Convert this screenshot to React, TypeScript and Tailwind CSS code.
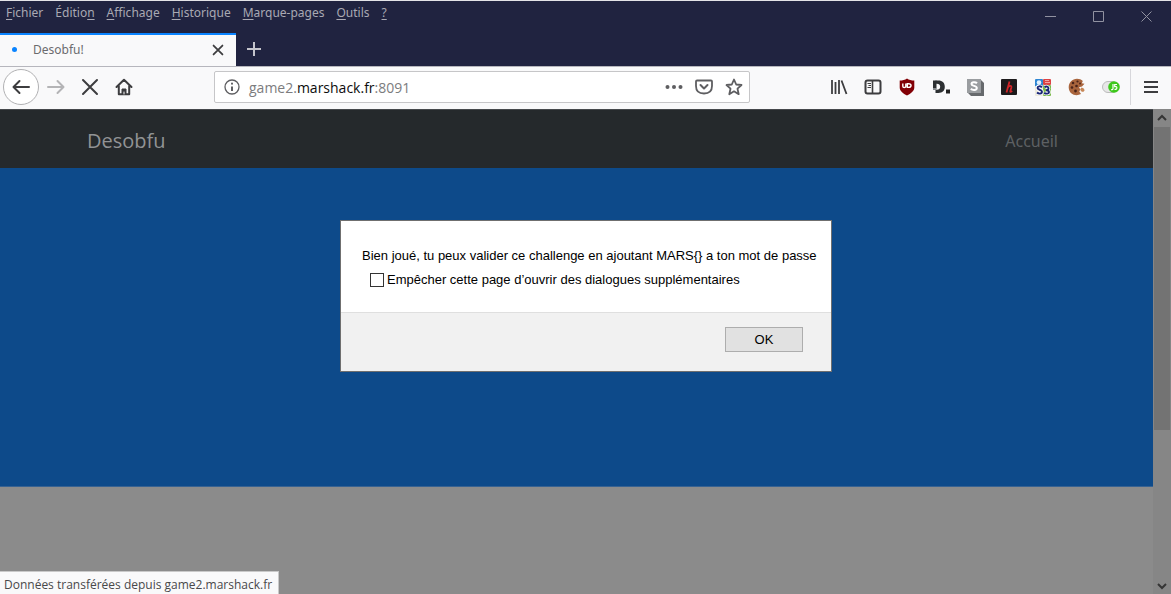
import type { ReactNode } from 'react';

const menus: [string, string, string][] = [
  ['', 'F', 'ichier'],
  ['Éditio', 'n', ''],
  ['', 'A', 'ffichage'],
  ['', 'H', 'istorique'],
  ['', 'M', 'arque-pages'],
  ['', 'O', 'utils'],
  ['', '?', ''],
];

function ToolButton({ label, children }: { label: string; children: ReactNode }) {
  return (
    <button type="button" aria-label={label} className="flex h-8 w-[34px] shrink-0 items-center justify-center text-[#3d3d3f]">
      {children}
    </button>
  );
}

function Icon({ size = 18, width = 2, children }: { size?: number; width?: number; children: ReactNode }) {
  return (
    <svg width={size} height={size} viewBox="0 0 18 18" fill="none" stroke="currentColor" strokeWidth={width} strokeLinecap="round" strokeLinejoin="round">
      {children}
    </svg>
  );
}

function TitleBar() {
  return (
    <header className="flex h-[66px] shrink-0 justify-between border-t border-[#e4e4e8] bg-[#202340]">
      <div className="flex flex-col">
        <nav className="flex h-8 items-start gap-3 pt-1 pl-1.5 text-[12px] leading-4 text-[#a9a9b3]">
          {menus.map(([before, key, after]) => (
            <button type="button" key={before + key + after}>
              {before}
              <span className="underline underline-offset-2">{key}</span>
              {after}
            </button>
          ))}
        </nav>
        <div className="flex flex-1 items-stretch">
          <div className="flex w-[236px] items-center border-t-2 border-[#0a84ff] bg-[#f9f9fa] pr-2.5 pb-0.5 pl-3">
            <span className="size-[5px] rounded-full bg-[#0a84ff]" />
            <span className="ml-4 flex-1 text-[12px] text-[#6b6b6e]">Desobfu!</span>
            <button type="button" aria-label="Fermer l’onglet" className="flex size-4 items-center justify-center text-[#3d3d3f]">
              <Icon size={16} width={2}>
                <path d="M4 4l10 10M14 4L4 14" />
              </Icon>
            </button>
          </div>
          <button type="button" aria-label="Nouvel onglet" className="flex w-9 items-center justify-center pb-0.5 text-[#c4c4cc]">
            <Icon>
              <path d="M9 2v14M2 9h14" strokeLinecap="butt" />
            </Icon>
          </button>
        </div>
      </div>
      <div className="flex h-[30px] pr-px text-[#9192a1]">
        <button type="button" aria-label="Réduire" className="flex w-12 items-center justify-center">
          <svg width="11" height="11" stroke="currentColor" fill="none"><path d="M0 5.5h11" /></svg>
        </button>
        <button type="button" aria-label="Agrandir" className="flex w-12 items-center justify-center">
          <svg width="11" height="11" stroke="currentColor" fill="none"><path d="M.5.5h10v10H.5z" /></svg>
        </button>
        <button type="button" aria-label="Fermer" className="flex w-12 items-center justify-center">
          <svg width="11" height="11" stroke="currentColor" fill="none"><path d="M.5.5l10 10M10.500.5l-10 10" /></svg>
        </button>
      </div>
    </header>
  );
}

function Extensions() {
  return (
    <>
      <ToolButton label="Bibliothèque">
        <svg width="18" height="16" viewBox="0 0 18 16" fill="none" stroke="currentColor" strokeWidth="1.8">
          <path d="M2 1v14M5.500 3v12M9 1v14M11.500 1.500l5 13.500" />
        </svg>
      </ToolButton>
      <ToolButton label="Panneau latéral">
        <svg width="18" height="16" viewBox="0 0 18 16" fill="none" stroke="currentColor">
          <rect x="1.500" y="1.500" width="15" height="13" rx="2" strokeWidth="2" />
          <path d="M8.500 2v12" strokeWidth="1.600" />
          <path d="M3.500 4.500h3.500M4.500 6.500h2.500M3.500 8.500h3.500" />
        </svg>
      </ToolButton>
      <ToolButton label="uBlock">
        <svg width="16" height="18" viewBox="0 0 16 18" fill="none">
          <path d="M8 .5c2 1.400 4.500 2 7.300 2v7c0 3.500-3.400 6-7.300 8-3.900-2-7.300-4.500-7.300-8v-7C3.500 2.500 6 1.900 8 .5z" fill="#820006" />
          <path d="M3.800 5.500v2.700c0 1.800 3 1.800 3 0V5.500M8.300 9.400V5.700h1.200c3.400 0 3.400 3.700 0 3.700z" stroke="#fff" strokeWidth="1.400" />
        </svg>
      </ToolButton>
      <ToolButton label="Dashlane">
        <svg width="18" height="16" viewBox="0 0 18 16">
          <path d="M3.500 1.500h2.800c4.200 0 6.500 2.400 6.500 6.300s-2.300 6.200-6.500 6.200H3.500v-3.300h1.300c2.200 0 3.400-1 3.400-2.900S7 4.800 4.800 4.800H3.500z" fill="#2d3032" />
          <path d="M1 1.500h3.500v8H1z" fill="#2d3032" />
          <path d="M1 9h3.500v2H1z" fill="#85898c" />
          <rect x="14" y="10.500" width="4" height="4" fill="#222" />
        </svg>
      </ToolButton>
      <ToolButton label="Stylus">
        <svg width="17" height="17" viewBox="0 0 17 17">
          <path d="M1 1h13l3 3v13H4l-3-3z" fill="#66696c" />
          <rect width="14" height="14" fill="#9a9da0" />
          <path d="M10 4.300C8.500 2.700 4.500 2.700 4.500 5s5.300 1.500 5.300 4-4.300 2.500-6 .8" fill="none" stroke="#fff" strokeWidth="2" />
        </svg>
      </ToolButton>
      <ToolButton label="Hackbar">
        <svg width="16" height="16" viewBox="0 0 16 16">
          <rect width="16" height="16" rx="1" fill="#1d1b1c" />
          <path d="M8.500 2.500L5.500 13.500M6.300 9.500C8 6.500 11 6 10.300 8.800l-1 3.300c-.2 1 .8 1 1.800-.3" fill="none" stroke="#cf2528" strokeWidth="1.800" />
        </svg>
      </ToolButton>
      <ToolButton label="S3 Traducteur">
        <svg width="18" height="17" viewBox="0 0 18 17">
          <rect x="1" width="8" height="8" rx="1" fill="#2e86d3" />
          <circle cx="5" cy="3.500" r="2.300" fill="#e4f2ff" />
          <rect x="9" width="8" height="6" rx="1" fill="#dc4345" />
          <path d="M11 1.500h4M11 3.500h5" stroke="#f4a3a3" />
          <rect x="1" y="7" width="8" height="10" rx="1" fill="#eceadb" />
          <rect x="9" y="6" width="8" height="11" rx="1" fill="#79b84b" />
          <g fill="none">
            <path d="M8 8.300C6.500 6.800 3.500 7 3.500 9s4.500 1.500 4.500 3.800-3.500 2.200-5 .7M10.500 8.200c1.800-1.200 4-.7 4 1s-1.300 2-2.500 2c1.500 0 3 .5 3 2s-2.800 2-4.800.7" stroke="#fff" strokeWidth="3.500" />
            <path d="M8 8.300C6.500 6.800 3.500 7 3.500 9s4.500 1.500 4.500 3.800-3.500 2.200-5 .7M10.500 8.200c1.800-1.200 4-.7 4 1s-1.300 2-2.500 2c1.500 0 3 .5 3 2s-2.800 2-4.800.7" stroke="#192677" strokeWidth="1.900" />
          </g>
        </svg>
      </ToolButton>
      <ToolButton label="Cookies">
        <svg width="18" height="18" viewBox="0 0 18 18">
          <path d="M9 .8c2.400 0 4.300.7 5.800 2.200l-1 2.200 2.700.6-2.500 2.700-3 .7 1.300 2.300-1 2 1.700 2.500C8 18.800 1 16.500.7 9.500.7 4.500 4.300.8 9 .8z" fill="#a9653d" />
          <path d="M13.500 9.500l2 .7 1.200 2-1.500 1.700-2.200-.7-.8-2z" fill="#c78757" />
          <g fill="#4a241a">
            <circle cx="5" cy="5" r="1.300" /><circle cx="9.500" cy="3.500" r="1.100" /><circle cx="4" cy="9.500" r="1.300" />
            <circle cx="8.500" cy="8" r="1.300" /><circle cx="7.500" cy="13" r="1.400" /><circle cx="12" cy="5.500" r=".9" />
          </g>
        </svg>
      </ToolButton>
      <ToolButton label="JavaScript">
        <svg width="18" height="14" viewBox="0 0 18 14">
          <rect x=".5" y="1.500" width="15" height="11" rx="5.500" fill="#e7e7e7" stroke="#bbb" />
          <circle cx="12" cy="7" r="5.800" fill="#3dc81b" />
          <path d="M11 4v4.500q0 1.500-2 1.200M15 4.500h-2.300v2.200h1.300q1 0 .8 1.400-.2 1.500-2.300 1.200" fill="none" stroke="#fff" strokeWidth="1.200" />
        </svg>
      </ToolButton>
    </>
  );
}

function Toolbar() {
  return (
    <div className="flex h-[43px] shrink-0 items-center border-t border-[#b6b6bd] bg-[#f9f9fa] pb-0.5 pl-[3px]">
      <button type="button" aria-label="Précédent" className="flex size-9 shrink-0 items-center justify-center rounded-full border border-[#b1b1b3] bg-white text-[#3d3d3f]">
        <Icon><path d="M17 9H2M7.500 3L1.500 9l6 6" /></Icon>
      </button>
      <div className="flex text-[#3d3d3f]">
        <button type="button" disabled aria-label="Suivant" className="flex w-[34px] items-center justify-center text-[#b4b4b6]">
          <Icon><path d="M1 9h15M10.500 3l6 6-6 6" /></Icon>
        </button>
        <ToolButton label="Arrêter"><Icon><path d="M2 2l14 14M16 2L2 16" /></Icon></ToolButton>
        <ToolButton label="Accueil">
          <Icon>
            <path d="M1.500 9L9 1.800 16.500 9M3.800 8v8.200h10.400V8" />
            <path d="M7 16v-5h4v5" fill="currentColor" strokeWidth="1" /><path d="M9 14v2" stroke="#f9f9fa" strokeWidth="1" />
          </Icon>
        </ToolButton>
      </div>
      <div className="mr-[72px] ml-[73px] flex h-8 min-w-0 flex-1 items-center rounded-xs border border-[#c6c6c8] bg-white pr-1.5 pl-2 text-[#5e5e61]">
        <Icon width={1}>
          <circle cx="9" cy="9" r="7" strokeWidth="1.300" />
          <path d="M9 8.500V13" strokeWidth="2" strokeLinecap="butt" /><path d="M9 5.500v.2" strokeWidth="2" />
        </Icon>
        <a href="#" className="ml-2 flex-1 pt-0.5 font-['Open_Sans',sans-serif] text-[14px] leading-5 text-[#7c7c7e]">
          game2.<span className="text-[#0c0c0d]">marshack.fr</span>:8091
        </a>
        <div className="flex items-center gap-3">
          <button type="button" aria-label="Actions">
            <svg width="18" height="6" viewBox="0 0 18 6" fill="currentColor"><circle cx="2.500" cy="3" r="2" /><circle cx="9" cy="3" r="2" /><circle cx="15.500" cy="3" r="2" /></svg>
          </button>
          <button type="button" aria-label="Pocket">
            <Icon><path d="M2 2.500h14q1 0 1 1V8q0 7.500-8 7.500T1 8V3.500q0-1 1-1z" strokeWidth="1.800" /><path d="M5.500 7L9 10.500 12.500 7" /></Icon>
          </button>
          <button type="button" aria-label="Marquer cette page">
            <Icon width={1.8}><path d="M9 1.500l2.200 5 5.300.5-4 3.700 1.200 5.500L9 13.300l-4.700 2.900 1.200-5.500-4-3.700 5.300-.5z" /></Icon>
          </button>
        </div>
      </div>
      <Extensions />
      <div className="ml-0.5 h-9 w-px bg-[#d7d7db]" />
      <button type="button" aria-label="Menu" className="flex w-10 items-center justify-center text-[#3d3d3f]">
        <svg width="14" height="14" stroke="currentColor" strokeWidth="2"><path d="M0 2h14M0 7h14M0 12h14" /></svg>
      </button>
    </div>
  );
}

function Scrollbar() {
  return (
    <div className="flex w-[18px] shrink-0 flex-col bg-[#868686] px-px text-[#353535]">
      <div className="flex h-[18px] items-center justify-center">
        <svg width="10" height="8" fill="none" stroke="currentColor" strokeWidth="2"><path d="M1 6l4-4 4 4" /></svg>
      </div>
      <div className="h-[303px] bg-[#737373]" />
      <div className="flex flex-1 items-end justify-center pb-1">
        <svg width="10" height="8" fill="none" stroke="currentColor" strokeWidth="2"><path d="M1 2l4 4 4-4" /></svg>
      </div>
    </div>
  );
}

function Dialog() {
  return (
    <div className="fixed inset-0 flex items-start justify-center pt-[220px] pl-px">
      <div role="dialog" aria-modal="true" className="w-[492px] border border-[#6f6f6f] bg-white font-['Liberation_Sans',Arial,sans-serif] text-[13px] leading-4 text-black">
        <div className="flex h-[91px] flex-col gap-2 pt-[27px] pl-[21px]">
          <p className="whitespace-nowrap">Bien joué, tu peux valider ce challenge en ajoutant MARS{'{}'} a ton mot de passe</p>
          <label className="flex items-center gap-[3px] pl-2">
            <input type="checkbox" className="size-[14px] appearance-none border border-[#333] bg-white checked:bg-[#333]" />
            Empêcher cette page d’ouvrir des dialogues supplémentaires
          </label>
        </div>
        <div className="flex h-[59px] items-start justify-end border-t border-[#dfdfdf] bg-[#f1f1f1] pt-3.5 pr-7">
          <button type="button" className="h-[25px] w-[78px] border border-[#adadad] bg-[#e1e1e1]">OK</button>
        </div>
      </div>
    </div>
  );
}

export default function App() {
  return (
    <div className="flex h-screen flex-col overflow-hidden font-['Noto_Sans','Open_Sans',sans-serif]">
      <TitleBar />
      <Toolbar />
      <div className="flex min-h-0 flex-1">
        <main className="flex flex-1 flex-col bg-[#8b8b8b]">
          <nav className="flex h-[59px] shrink-0 items-center justify-between border-t border-[#46494c] bg-[#25292c] pr-[95px] pl-[87px] pt-1">
            <a href="#" className="font-['Open_Sans',sans-serif] text-[20px] text-[#919395]">Desobfu</a>
            <a href="#" className="text-[16px] text-[#5d6063]">Accueil</a>
          </nav>
          <section className="h-[319px] shrink-0 border-b border-[#376292] bg-[#0d4a8a]" />
        </main>
        <Scrollbar />
      </div>
      <div role="status" className="fixed bottom-0 left-0 border-t border-r border-[#c9c9c9] bg-[#f9f9fa] pt-[5px] pr-1.5 pb-px pl-1 font-['Open_Sans',sans-serif] text-[12px] leading-4 text-[#48484a]">
        Données transférées depuis game2.marshack.fr
      </div>
      <Dialog />
    </div>
  );
}
